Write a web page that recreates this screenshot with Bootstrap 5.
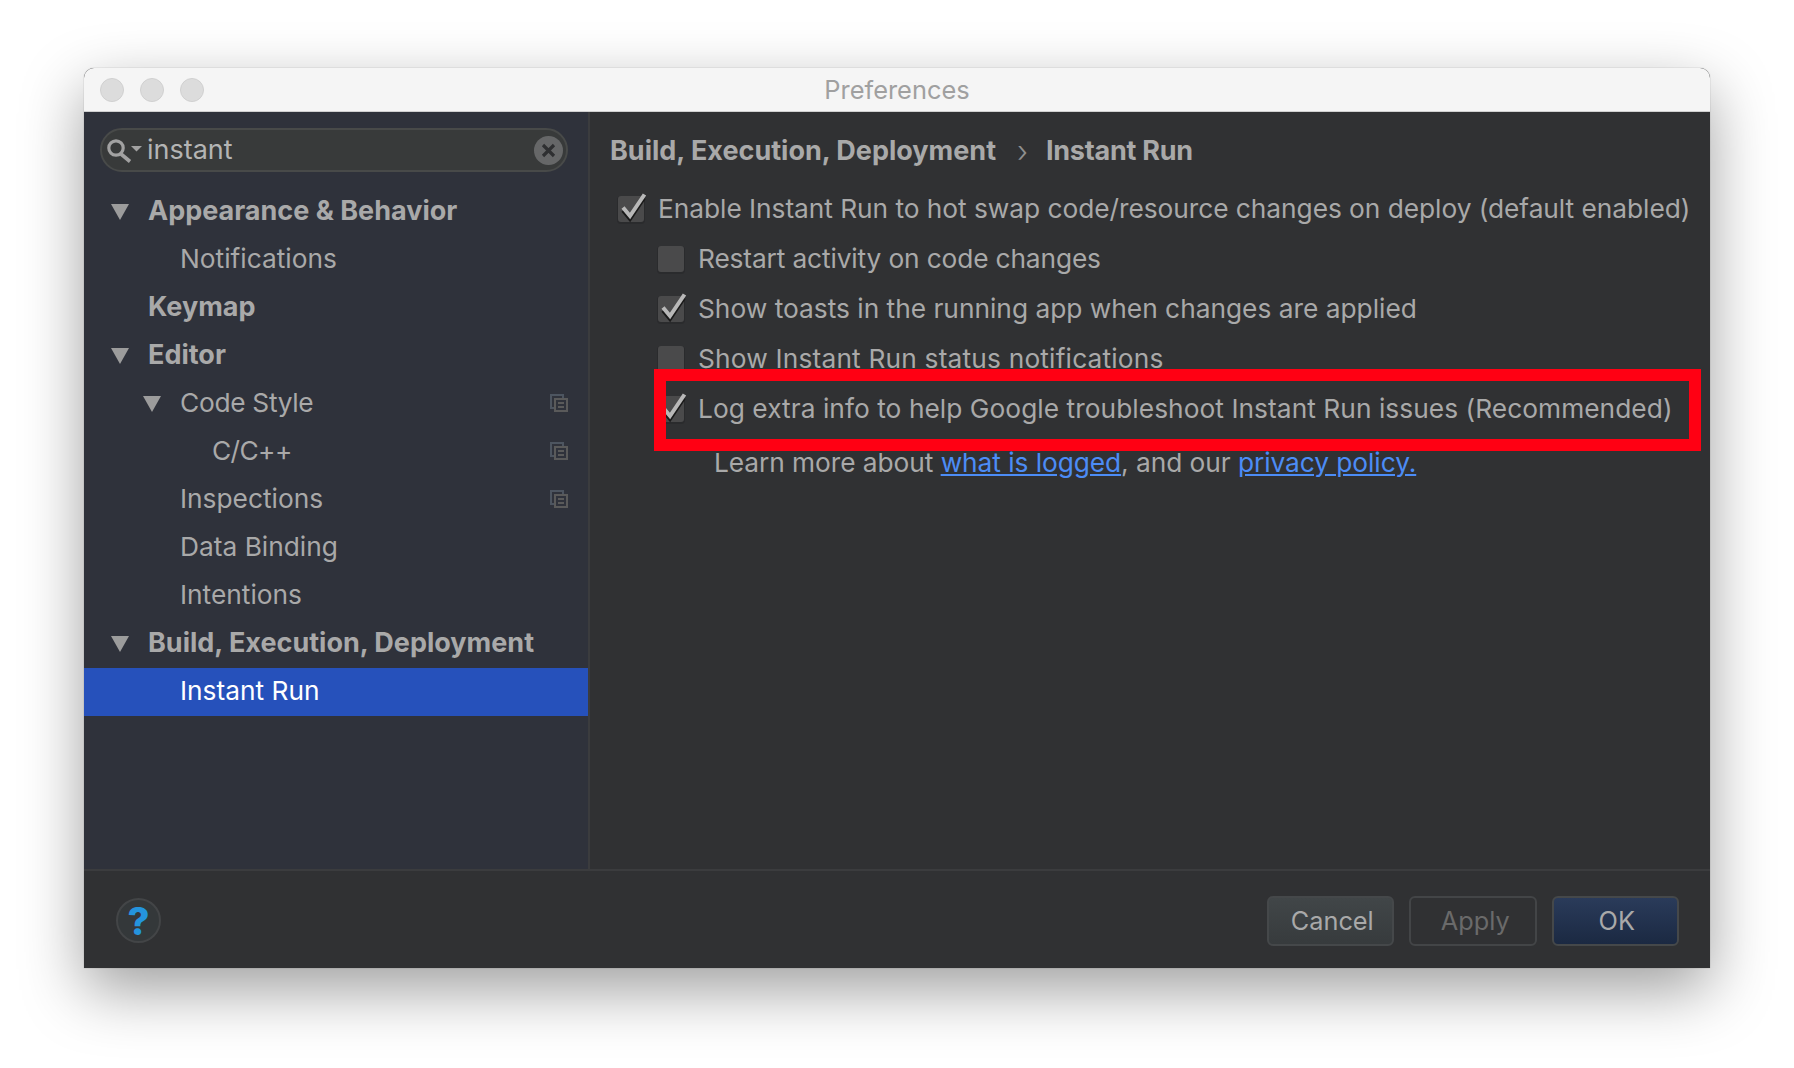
<!DOCTYPE html>
<html lang="en">
<head>
<meta charset="UTF-8">
<title>Preferences</title>
<link href="https://cdn.jsdelivr.net/npm/bootstrap@5.3.0/dist/css/bootstrap.min.css" rel="stylesheet">
<style>
body { background: #fff; font-family: Inter, "Liberation Sans", sans-serif; font-size: 26.3px; color: #a9a9a9; padding: 68px 84px 0; height: 1068px; overflow: hidden; }
.prefs-win { height: 900px; border-radius: 10px 10px 0 0; box-shadow: 0 22px 62px rgba(0,0,0,.38), 0 0 1px rgba(0,0,0,.5); overflow: hidden; background: #303133; }
.title-bar { height: 44px; background: #f5f5f5; border-bottom: 1px solid #d0d0d0; position: relative; padding-left: 16px; gap: 16px; }
.title-bar span.light { width: 24px; height: 24px; border-radius: 50%; background: #dcdcdc; border: 1px solid #d0d0d0; }
.title-txt { position: absolute; left: 0; right: 0; top: 3px; text-align: center; color: #a0a0a0; font-size: 25.400px; }
.main-area { height: 759px; border-bottom: 2px solid #3b3c3e; }
.side-pane { width: 506px; background: #2f323b; border-right: 2px solid #3b3c3e; padding-top: 16px; }
.search-box { height: 44px; margin: 0 20px 16px 16px; border: 2px solid #484a49; border-radius: 23px; background: #383a3a; padding: 0 3px 0 5px; color: #b4b4b4; font-size: 27px; }
.search-box svg { flex: none; }
.clear-ico { margin-left: auto; }
.tree-row { height: 48px; padding-bottom: 2px; }
.tree-row.lvl1 { padding-left: 64px; }
.tree-row.lvl2 { padding-left: 96px; }
.tree-row.lvl3 { padding-left: 128px; letter-spacing: -.6px; }
.tree-row.head { font-weight: 700; font-size: 27px; }
.tree-row .arrow { position: absolute; margin-top: 2px; margin-left: -37px; width: 0; height: 0; border-left: 9.500px solid transparent; border-right: 9.500px solid transparent; border-top: 16px solid #9c9c9c; }
.tree-row .copy-ico { margin-left: auto; margin-right: 20px; }
.tree-row.picked { background: #2651bb; color: #fff; }
.tight-a { letter-spacing: -.3px; }
.opt-pane { position: relative; padding: 14px 0 0 20px; }
.crumb { font-weight: 700; font-size: 27px; height: 50px; margin-bottom: 8px; }
.crumb .sep { margin: 0 18px 0 21px; font-weight: 300; font-size: 30px; line-height: 1; color: #8f8f8f; }
.crumb-end { letter-spacing: -.25px; }
.opt-row { height: 50px; padding-left: 7px; }
.opt-row.sub { padding-left: 47px; }
.opt-row .tick { width: 28px; height: 29px; margin-right: 13px; flex: none; overflow: visible; }
.sp-enable { letter-spacing: -.04px; }
.sp-restart { letter-spacing: -.14px; }
.sp-status { letter-spacing: .18px; }
.sp-log { letter-spacing: .05px; }
.learn-row { padding-left: 104px; padding-top: 9px; letter-spacing: -.06px; }
.learn-row a { color: #4c8cf6; }
.red-frame { position: absolute; left: 64px; top: 257px; width: 1047px; height: 82px; border: 12px solid #ff0013; }
.foot-bar { height: 97px; padding: 2px 31px 0 32px; }
.help-btn { width: 45px; height: 45px; border-radius: 50%; background: #34383a; border: 2px solid #434547; color: #2494dd; font-weight: 800; font-size: 38px; line-height: 1; }
.act-btn { width: 127.500px; height: 50px; border-radius: 6px; font-size: 25.300px; padding: 0 0 0 4px; color: #a9a9a9; border: 2px solid #45484a; background: linear-gradient(#414648, #373b3d); }
.act-btn:disabled { background: transparent; border-color: #434547; color: #6a6a6a; opacity: 1; padding-left: 5px; }
.act-btn.ok { background: linear-gradient(#2a3b5a, #1b2942); padding-left: 3px; }
.act-btn:hover { color: #a9a9a9; }
.btn-strip { gap: 15px; }
</style>
</head>
<body>
<svg width="0" height="0" class="position-absolute">
  <defs>
    <g id="cbEmpty">
      <rect x="0" y="1" width="28" height="28" rx="4" fill="#2a2b2d"/>
      <rect x="1" y="1" width="26" height="26" rx="3" fill="#4a4a4b"/>
    </g>
    <g id="cbTick">
      <use href="#cbEmpty"/>
      <path d="M6 15.500 L13 24 L27 3" fill="none" stroke="#1a1a1a" stroke-width="4"/>
      <path d="M6 12.500 L13 21 L27.500 -.5" fill="none" stroke="#b8b8b8" stroke-width="4"/>
    </g>
    <g id="copyIco" fill="none" stroke-width="2">
      <rect x="1" y="1" width="12" height="13" stroke="#4d5560"/>
      <rect x="5" y="5" width="12" height="12" fill="#2f323b" stroke="#5a5a5a"/>
      <path d="M8 9h6M8 13h6" stroke="#5a5a5a"/>
    </g>
  </defs>
</svg>
<div class="prefs-win d-flex flex-column">
  <div class="title-bar d-flex align-items-center">
    <span class="light"></span><span class="light"></span><span class="light"></span>
    <div class="title-txt">Preferences</div>
  </div>
  <div class="main-area d-flex">
    <div class="side-pane flex-shrink-0">
      <div class="search-box d-flex align-items-center">
        <svg width="36" height="30" viewBox="0 0 36 30">
          <circle cx="9" cy="13" r="7.200" fill="none" stroke="#a2a2a2" stroke-width="3.200"/>
          <path d="M14 19l9 7.500" stroke="#a2a2a2" stroke-width="3.600"/>
          <path d="M24 11h11l-5.500 5.500z" fill="#a2a2a2"/>
        </svg>
        <span class="ms-1">instant</span>
        <svg class="clear-ico" width="29" height="29" viewBox="0 0 29 29">
          <circle cx="14.500" cy="14.500" r="14.500" fill="#666768"/>
          <path d="M9 9l11 11M20 9L9 20" stroke="#2e2f31" stroke-width="3.200"/>
        </svg>
      </div>
      <div class="tree-row lvl1 head d-flex align-items-center"><i class="arrow"></i>Appearance &amp; Behavior</div>
      <div class="tree-row lvl2 d-flex align-items-center">Notifications</div>
      <div class="tree-row lvl1 head d-flex align-items-center">Keymap</div>
      <div class="tree-row lvl1 head d-flex align-items-center"><i class="arrow"></i>Editor</div>
      <div class="tree-row lvl2 tight-a d-flex align-items-center"><i class="arrow"></i>Code Style<svg class="copy-ico" width="18" height="18"><use href="#copyIco"/></svg></div>
      <div class="tree-row lvl3 d-flex align-items-center">C/C++<svg class="copy-ico" width="18" height="18"><use href="#copyIco"/></svg></div>
      <div class="tree-row lvl2 d-flex align-items-center">Inspections<svg class="copy-ico" width="18" height="18"><use href="#copyIco"/></svg></div>
      <div class="tree-row lvl2 d-flex align-items-center">Data Binding</div>
      <div class="tree-row lvl2 d-flex align-items-center">Intentions</div>
      <div class="tree-row lvl1 head d-flex align-items-center"><i class="arrow"></i>Build, Execution, Deployment</div>
      <div class="tree-row lvl2 picked d-flex align-items-center">Instant Run</div>
    </div>
    <div class="opt-pane flex-grow-1">
      <div class="crumb d-flex align-items-center">Build, Execution, Deployment<span class="sep">›</span><span class="crumb-end">Instant Run</span></div>
      <div class="opt-row sp-enable d-flex align-items-center"><svg class="tick" viewBox="0 0 28 29"><use href="#cbTick"/></svg>Enable Instant Run to hot swap code/resource changes on deploy (default enabled)</div>
      <div class="opt-row sub sp-restart d-flex align-items-center"><svg class="tick" viewBox="0 0 28 29"><use href="#cbEmpty"/></svg>Restart activity on code changes</div>
      <div class="opt-row sub d-flex align-items-center"><svg class="tick" viewBox="0 0 28 29"><use href="#cbTick"/></svg>Show toasts in the running app when changes are applied</div>
      <div class="opt-row sub sp-status d-flex align-items-center"><svg class="tick" viewBox="0 0 28 29"><use href="#cbEmpty"/></svg>Show Instant Run status notifications</div>
      <div class="opt-row sub sp-log d-flex align-items-center"><svg class="tick" viewBox="0 0 28 29"><use href="#cbTick"/></svg>Log extra info to help Google troubleshoot Instant Run issues (Recommended)</div>
      <div class="learn-row">Learn more about <a href="#">what is logged</a>, and our <a href="#">privacy policy.</a></div>
      <div class="red-frame"></div>
    </div>
  </div>
  <div class="foot-bar d-flex align-items-center">
    <div class="help-btn d-flex align-items-center justify-content-center">?</div>
    <div class="ms-auto d-flex btn-strip">
      <button class="btn act-btn">Cancel</button>
      <button class="btn act-btn" disabled>Apply</button>
      <button class="btn act-btn ok">OK</button>
    </div>
  </div>
</div>
</body>
</html>
